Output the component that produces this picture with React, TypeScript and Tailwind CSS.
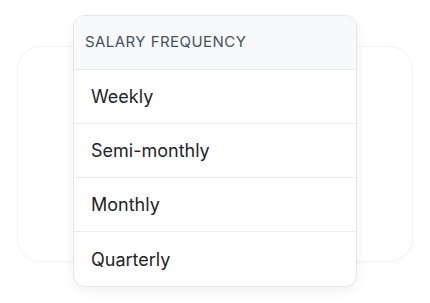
import React from "react";

const options = ["Weekly", "Semi-monthly", "Monthly", "Quarterly"];

export default function App() {
  return (
    <div
      className="w-full h-[303px] bg-white pt-[15px] flex justify-center"
      style={{ fontFamily: "Inter, 'Noto Sans', sans-serif" }}
    >
      <div className="grid">
        <div className="col-start-1 row-start-1 self-start justify-self-center mt-[31px] w-[396px] h-[216px] rounded-[24px] border border-[#f1f2f4] bg-white shadow-[0_2px_8px_rgba(0,0,0,0.02)]" />
        <div className="col-start-1 row-start-1 self-start justify-self-center z-10 w-[284px] rounded-[12px] border border-[#e3e6ea] bg-white overflow-hidden shadow-[0_4px_12px_rgba(15,23,42,0.06)]">
          <div className="h-[54px] flex items-center px-[11px] bg-[#f7f9fb] border-b border-[#e8ebef] text-[15px] text-[#475160] tracking-[0.03em]">
            SALARY FREQUENCY
          </div>
          {options.map((o, i) => (
            <div
              key={o}
              className={
                "h-[54px] flex items-center px-[17px] text-[18px] text-[#1f2328] " +
                (i < options.length - 1 ? "border-b border-[#e8ebef]" : "")
              }
            >
              {o}
            </div>
          ))}
        </div>
      </div>
    </div>
  );
}
